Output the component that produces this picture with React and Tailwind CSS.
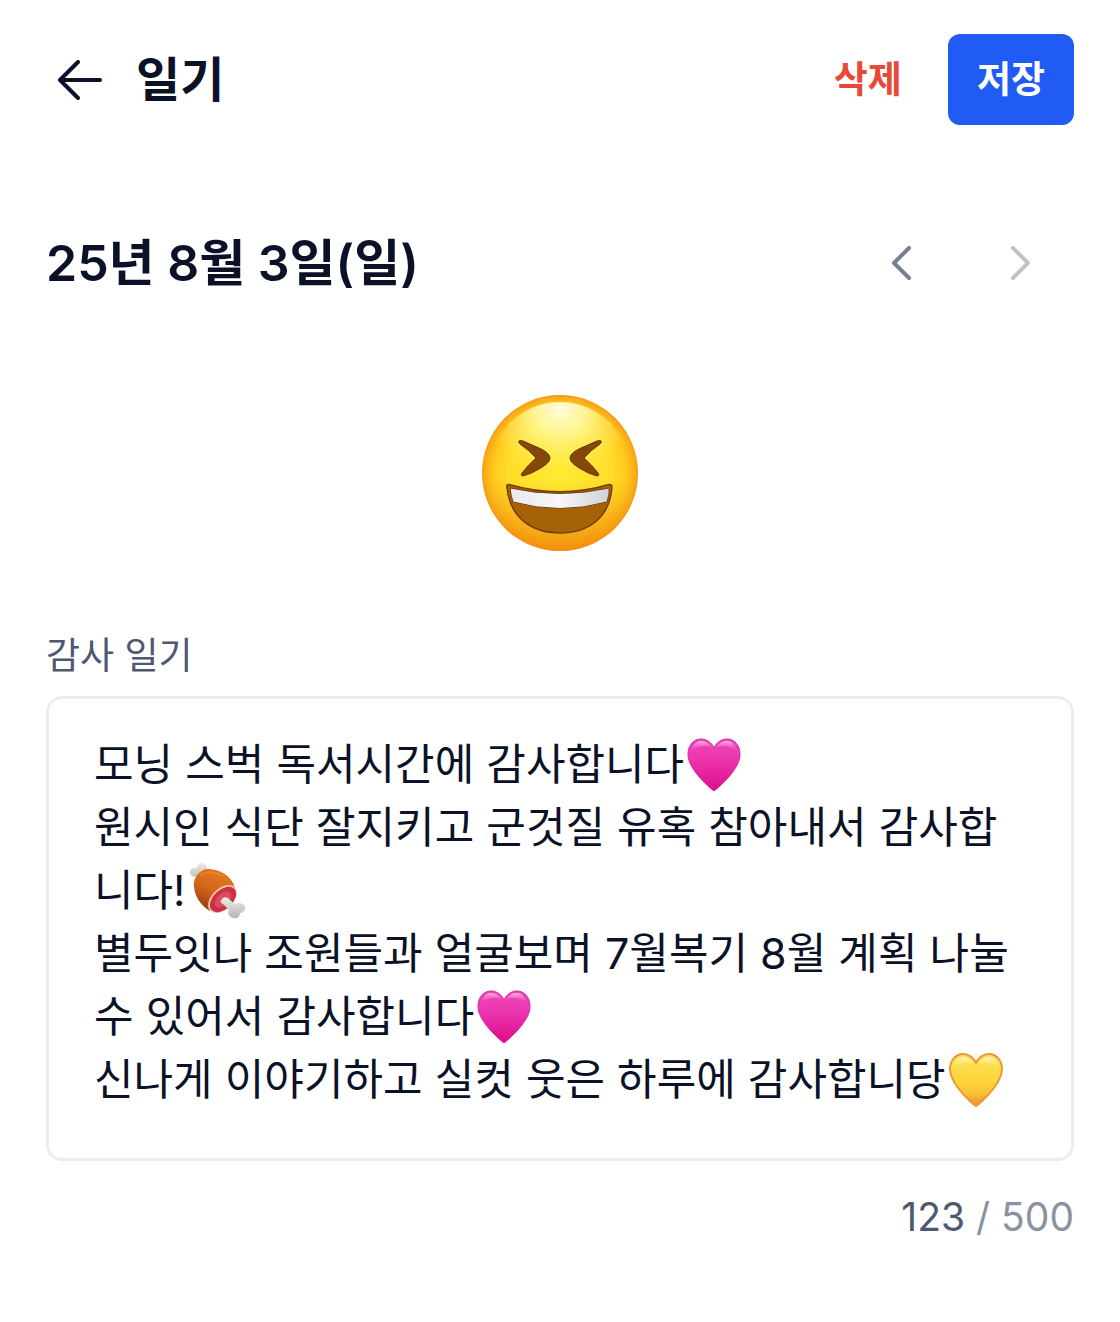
import { Fragment, useState } from 'react';

const MAX_LENGTH = 500;

const INITIAL_TEXT = `모닝 스벅 독서시간에 감사합니다🩷
원시인 식단 잘지키고 군것질 유혹 참아내서 감사합니다!🍖
별두잇나 조원들과 얼굴보며 7월복기 8월 계획 나눌 수 있어서 감사합니다🩷
신나게 이야기하고 실컷 웃은 하루에 감사합니당💛`;

const HEART_PATH = 'M27 53C24 51 15 43 9 35C4 28 1 23 1 16C1 7 7 1 14 1C20 1 25 5 27 10C29 5 34 1 40 1C47 1 53 7 53 16C53 23 50 28 45 35C39 43 30 51 27 53Z';

const PinkHeart = () => (
  <svg viewBox="0 0 54 54" className="size-[54px] shrink-0" aria-hidden="true">
    <defs>
      <linearGradient id="pink-heart" x1="0" y1="0" x2="0" y2="1">
        <stop offset="0" stopColor="#ec48b8" />
        <stop offset="0.4" stopColor="#ec35ae" />
        <stop offset="1" stopColor="#dd0c8a" />
      </linearGradient>
      <linearGradient id="pink-shine" x1="0" y1="0" x2="0" y2="1">
        <stop offset="0" stopColor="#ffb4e6" />
        <stop offset="1" stopColor="#f04fbb" stopOpacity="0" />
      </linearGradient>
    </defs>
    <path d={HEART_PATH} fill="url(#pink-heart)" stroke="#d92ba0" strokeWidth="1" />
    <path d="M4 14C5 7 9 3 14 3C19 3 23 6 25 10C20 7 10 7 4 14Z" fill="url(#pink-shine)" />
    <path d="M29 10C31 6 35 3 40 3C45 3 49 7 50 14C44 7 34 7 29 10Z" fill="url(#pink-shine)" />
  </svg>
);

const YellowHeart = () => (
  <svg viewBox="0 0 54 54" className="size-[54px] shrink-0" aria-hidden="true">
    <defs>
      <linearGradient id="yellow-heart" x1="0" y1="0" x2="0" y2="1">
        <stop offset="0" stopColor="#ffe25c" />
        <stop offset="0.5" stopColor="#fdd63b" />
        <stop offset="0.75" stopColor="#f9c433" />
        <stop offset="1" stopColor="#ea8f33" />
      </linearGradient>
      <linearGradient id="yellow-shine" x1="0" y1="0" x2="0" y2="1">
        <stop offset="0" stopColor="#fff6b8" />
        <stop offset="1" stopColor="#ffe25a" stopOpacity="0" />
      </linearGradient>
    </defs>
    <path d={HEART_PATH} fill="url(#yellow-heart)" stroke="#eb9a35" strokeWidth="2" />
    <path d="M4 17C4 8 9 4 14 4C19 4 23 7 25 12C19 9 9 9 4 17Z" fill="url(#yellow-shine)" />
    <path d="M29 12C31 7 35 4 40 4C45 4 50 8 50 17C45 9 35 9 29 12Z" fill="url(#yellow-shine)" />
  </svg>
);

const MeatOnBone = () => (
  <svg viewBox="0 0 57 57" className="size-[57px] shrink-0" aria-hidden="true">
    <defs>
      <linearGradient id="meat-skin" x1="0.7" y1="0" x2="0.2" y2="1">
        <stop offset="0" stopColor="#e27c1d" />
        <stop offset="0.5" stopColor="#d4661a" />
        <stop offset="1" stopColor="#8f3c14" />
      </linearGradient>
      <linearGradient id="bone" x1="0" y1="0" x2="0" y2="1">
        <stop offset="0" stopColor="#eeece7" />
        <stop offset="1" stopColor="#bab5ad" />
      </linearGradient>
    </defs>
    <path d="M8 15C3 15 0 12 1 9C2 6 5 5 8 6C8 2 11 0 14 1C18 2 19 6 17 9L20 13L12 19Z" fill="url(#bone)" />
    <path d="M6 17C8 12 12 8 18 7C25 7 32 9 37 13C42 17 45 21 46 27L21 49C14 45 8 38 6 30C5 25 4 21 6 17Z" fill="url(#meat-skin)" />
    <path d="M12 13C18 9 27 10 34 14" fill="none" stroke="#ec983e" strokeWidth="2" strokeLinecap="round" opacity="0.5" />
    <ellipse cx="33.5" cy="37" rx="17" ry="10.5" transform="rotate(-43 33.5 37)" fill="#f3c6ab" />
    <ellipse cx="34" cy="37.5" rx="15.5" ry="9.5" transform="rotate(-43 34 37.5)" fill="#c92f45" />
    <ellipse cx="34" cy="37.5" rx="10" ry="6" transform="rotate(-43 34 37.5)" fill="#dc4a5b" />
    <path d="M33 37C35 34 39 35 41 38L46 42C49 40 54 41 56 44C57 48 54 51 51 51C51 55 48 57 44 56C40 55 38 51 40 48L34 42C31 41 31 39 33 37Z" fill="url(#bone)" />
  </svg>
);

const LaughingFace = () => (
  <svg viewBox="0 0 156 156" className="size-39" role="img" aria-label="활짝 웃는 얼굴">
    <defs>
      <radialGradient id="face-base" cx="50%" cy="50%" r="50%">
        <stop offset="0" stopColor="#ffea32" />
        <stop offset="0.65" stopColor="#ffde2a" />
        <stop offset="0.86" stopColor="#fec81e" />
        <stop offset="0.96" stopColor="#fbae15" />
        <stop offset="1" stopColor="#f29a18" />
      </radialGradient>
      <linearGradient id="face-shade" x1="0" y1="0" x2="0" y2="1">
        <stop offset="0.55" stopColor="#f59a10" stopOpacity="0" />
        <stop offset="1" stopColor="#ef8a0c" stopOpacity="0.8" />
      </linearGradient>
      <radialGradient id="face-shine" gradientUnits="userSpaceOnUse" cx="0" cy="0" r="1" gradientTransform="translate(78 14) scale(76 66)">
        <stop offset="0" stopColor="#fffde0" />
        <stop offset="0.35" stopColor="#fffaa6" stopOpacity="0.85" />
        <stop offset="1" stopColor="#fff25a" stopOpacity="0" />
      </radialGradient>
      <linearGradient id="face-teeth" x1="0" y1="0" x2="1" y2="0">
        <stop offset="0" stopColor="#e9e9ee" />
        <stop offset="0.5" stopColor="#f7f7f9" />
        <stop offset="1" stopColor="#cfd1d8" />
      </linearGradient>
    </defs>
    <circle cx="78" cy="78" r="78" fill="url(#face-base)" />
    <circle cx="78" cy="78" r="78" fill="url(#face-shade)" />
    <circle cx="78" cy="78" r="71" fill="url(#face-shine)" />
    <path d="M37 46Q38 45 41 46L57 53Q68 58 68 63Q68 68 57 74Q49 79 41 81Q38 81 40 78Q46 70 54 63Q47 55 38 49Q36 47 37 46Z" fill="#84480a" stroke="#653504" strokeWidth="1" />
    <path d="M119 46Q118 45 115 46L99 53Q88 58 88 63Q88 68 99 74Q107 79 115 81Q118 81 116 78Q110 70 102 63Q109 55 118 49Q120 47 119 46Z" fill="#84480a" stroke="#653504" strokeWidth="1" />
    <path d="M27 89.5Q78 104 127 89.5Q130 89 130 92C128 122 107 138 78 138C49 138 28 122 25 93Q24 89 27 89.5Z" fill="#a56306" stroke="#74400a" strokeWidth="1.5" />
    <path d="M28 93Q78 104 127 93Q128 98 125 107Q78 120 31 107Q29 101 28 93Z" fill="url(#face-teeth)" stroke="#74400a" strokeWidth="1" />
  </svg>
);

const EMOJI = {
  '🩷': PinkHeart,
  '💛': YellowHeart,
  '🍖': MeatOnBone,
};

// Text with the known emoji swapped for our own drawings
const EmojiText = ({ text }) =>
  text.split(/(🩷|💛|🍖)/u).map((part, i) => {
    const Icon = EMOJI[part];
    if (!Icon) return <Fragment key={i}>{part}</Fragment>;
    return (
      <span key={i} className="inline-flex h-[63px] w-[54px] items-center pl-[3px] align-top">
        <Icon />
      </span>
    );
  });

const App = () => {
  const [text, setText] = useState(INITIAL_TEXT);

  return (
    <main lang="ko" className="px-[46px] pt-[34px] pb-20 text-[#0b1228] font-['Inter','Noto_Sans_CJK_KR',sans-serif]">
      {/* Header */}
      <header className="flex items-center">
        <button type="button" aria-label="뒤로" className="pl-3">
          <svg width="44" height="40" viewBox="0 0 44 40" fill="none" stroke="currentColor" strokeWidth="4" strokeLinecap="round" strokeLinejoin="round">
            <path d="M42 20H2M20 2L2 20l18 18" />
          </svg>
        </button>
        <h1 className="ml-[34px] text-[48px] font-semibold">일기</h1>
        <button type="button" className="ml-auto text-[37px] font-semibold text-[#e94a38]">삭제</button>
        <button type="button" className="ml-[46px] h-[91px] rounded-xl bg-[#205bf3] px-[29px] text-[37px] font-semibold text-white">
          저장
        </button>
      </header>

      {/* Date */}
      <section className="mt-[102px] flex h-[72px] items-center justify-between">
        <h2 className="text-[50px] font-semibold">25년 8월 3일(일)</h2>
        <div className="flex gap-[98px] pr-[44px]">
          <button type="button" aria-label="이전 날" className="text-[#788096]">
            <svg width="20" height="34" viewBox="0 0 20 34" fill="none" stroke="currentColor" strokeWidth="4" strokeLinecap="round" strokeLinejoin="round">
              <path d="M17 2L2 17l15 15" />
            </svg>
          </button>
          <button type="button" aria-label="다음 날" className="text-[#c1c3cb]">
            <svg width="20" height="34" viewBox="0 0 20 34" fill="none" stroke="currentColor" strokeWidth="4" strokeLinecap="round" strokeLinejoin="round">
              <path d="M3 2l15 15L3 32" />
            </svg>
          </button>
        </div>
      </section>

      <div className="mt-24 flex justify-center">
        <LaughingFace />
      </div>

      {/* Entry */}
      <label htmlFor="gratitude" className="mt-[77px] mb-3 block text-[37px] leading-[56px] text-[#4d5871]">
        감사 일기
      </label>
      <div className="relative text-[43px] leading-[63px]">
        <div aria-hidden="true" className="min-h-40 rounded-2xl border-3 border-[#ededf0] px-[45px] pt-[34px] pb-[47px] wrap-break-word whitespace-pre-wrap">
          <EmojiText text={text} />
        </div>
        <textarea
          id="gratitude"
          value={text}
          maxLength={MAX_LENGTH}
          onChange={(e) => setText(e.target.value)}
          className="absolute inset-0 resize-none overflow-hidden rounded-2xl border-3 border-transparent px-[45px] pt-[34px] pb-[47px] text-transparent caret-[#0b1228] outline-none"
        />
      </div>

      <p className="mt-7 text-right text-[39px] leading-[56px] text-[#8a92a2]">
        <span className="text-[#4d5871]">{text.length}</span> / {MAX_LENGTH}
      </p>
    </main>
  );
};

export default App;
